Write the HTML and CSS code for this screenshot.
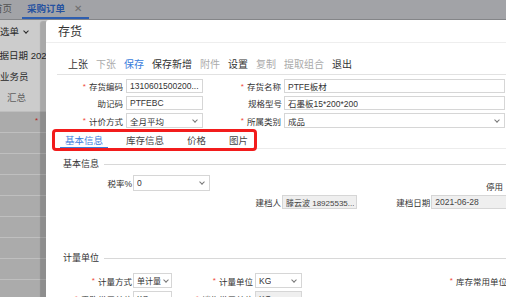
FILE: index.html
```html
<!DOCTYPE html>
<html lang="zh-CN">
<head>
    <meta charset="UTF-8">
    <meta name="viewport" content="width=device-width, initial-scale=1.0">
    <title>存货</title>
    <link rel="stylesheet" href="styles.css">
</head>
<body>
    <!-- page behind the dialog -->
    <div class="app">
        <div class="topbar">
            <span class="tab tab-home">首页</span>
            <span class="tab tab-active">采购订单<i class="tab-close">✕</i></span>
        </div>
        <div class="filters">
            <div class="filter filter-pick">选单 <span class="caret"></span></div>
            <div class="filter filter-date">单据日期 2021</div>
            <div class="filter filter-man">业务员</div>
        </div>
        <div class="grid">
            <div class="grid-head">汇总</div>
            <div class="grid-row"><span class="cell-star">*</span></div>
            <div class="grid-row"></div>
            <div class="grid-row"></div>
            <div class="grid-row"></div>
            <div class="grid-row"></div>
            <div class="grid-row"></div>
            <div class="grid-row"></div>
            <div class="grid-row"></div>
            <div class="grid-row"></div>
        </div>
    </div>
    <div class="mask"></div>

    <!-- 存货 dialog -->
    <div class="dialog">
        <div class="dlg-head">存货</div>
        <div class="toolbar">
            <span>上张</span>
            <span class="off">下张</span>
            <span class="primary">保存</span>
            <span>保存新增</span>
            <span class="off">附件</span>
            <span>设置</span>
            <span class="off">复制</span>
            <span class="off">提取组合</span>
            <span>退出</span>
        </div>

        <div class="form-head">
            <div class="lbl"><i class="req">*</i>存货编码</div><div class="box"><span class="val">1310601500200...</span></div>
            <div class="lbl"><i class="req">*</i>存货名称</div><div class="box"><span class="val">PTFE板材</span></div>
            <div class="lbl">助记码</div><div class="box"><span class="val">PTFEBC</span></div>
            <div class="lbl">规格型号</div><div class="box"><span class="val">石墨板15*200*200</span></div>
            <div class="lbl"><i class="req">*</i>计价方式</div><div class="box select"><span class="val">全月平均</span></div>
            <div class="lbl"><i class="req">*</i>所属类别</div><div class="box select"><span class="val">成品</span></div>
        </div>

        <div class="tabs">
            <span class="tab-item active">基本信息</span>
            <span class="tab-item">库存信息</span>
            <span class="tab-item">价格</span>
            <span class="tab-item">图片</span>
        </div>
        <div class="mark"></div>

        <div class="section section-basic">基本信息</div>
        <div class="row row-tax">
            <div class="lbl lbl-a">税率%</div><div class="box select box-tax"><span class="val">0</span></div>
            <div class="flag">停用</div>
        </div>
        <div class="row row-maker">
            <div class="lbl lbl-maker">建档人</div><div class="box off box-maker"><span class="val">滕云波 18925535...</span></div>
            <div class="lbl lbl-date">建档日期</div><div class="box off box-date"><span class="val">2021-06-28</span></div>
        </div>

        <div class="section section-unit">计量单位</div>
        <div class="row row-unit">
            <div class="lbl lbl-a"><i class="req">*</i>计量方式</div><div class="box select box-s"><span class="val">单计量</span></div>
            <div class="lbl lbl-b"><i class="req">*</i>计量单位</div><div class="box select box-m"><span class="val">KG</span></div>
            <div class="lbl lbl-c"><i class="req">*</i>库存常用单位</div>
        </div>
        <div class="row row-unit">
            <div class="lbl lbl-a"><i class="req">*</i>采购常用单位</div><div class="box select box-s"><span class="val">KG</span></div>
            <div class="lbl lbl-b"><i class="req">*</i>销售常用单位</div><div class="box select off box-m"><span class="val">KG</span></div>
        </div>
    </div>
</body>
</html>
```

FILE: styles.css
```css
* {
    box-sizing: border-box;
}

body {
    margin: 0;
    width: 506px;
    height: 297px;
    overflow: hidden;
    position: relative;
    background: #fff;
    color: #333;
    font-family: "Liberation Sans", "Noto Sans CJK SC", sans-serif;
}

/* background page */
.app {
    height: 100%;
}

.topbar {
    height: 20px;
    background: #cbccd1;
    border-bottom: 1px solid #a6a7ab;
    display: flex;
    align-items: flex-end;
    font-size: 9.5px;
}

.tab {
    height: 19px;
    line-height: 17px;
    padding: 0 5px;
    white-space: nowrap;
}

.tab-home {
    margin-left: -12px;
    margin-right: 5px;
    color: #666;
}

.tab-active {
    color: #2f67c9;
    font-weight: bold;
    padding-right: 7px;
    border-bottom: 2px solid #3a76dc;
}

.tab-close {
    font-style: normal;
    font-weight: normal;
    color: #8a8a8a;
    margin-left: 9px;
}

.filters {
    width: 46px;
    height: 66px;
    overflow: hidden;
    font-size: 9.5px;
    line-height: 12px;
    white-space: nowrap;
}

.filter-pick {
    padding-top: 6px;
}

.caret {
    display: inline-block;
    width: 4px;
    height: 4px;
    margin: 0 0 2px 2px;
    border-right: 1px solid #333;
    border-bottom: 1px solid #333;
    transform: rotate(45deg);
}

.filter-date {
    margin: 12px 0 0 -10px;
}

.filter-man {
    margin-top: 9px;
}

.grid {
    font-size: 9.5px;
}

.grid-head {
    height: 26px;
    padding: 4px 0 0 7px;
    color: #777;
    border-bottom: 1px solid #eee;
}

.grid-row {
    height: 21px;
    background: #d6d6d6;
    border-bottom: 1px solid #efefef;
}

.cell-star {
    display: block;
    padding: 4px 0 0 35px;
    color: #e0302a;
    font-size: 8px;
}

.mask {
    position: absolute;
    top: 0;
    left: 0;
    width: 100%;
    height: 100%;
    background: rgba(0, 0, 0, 0.2);
}

/* dialog */
.dialog {
    position: absolute;
    left: 46px;
    top: 20px;
    width: 462px;
    height: 290px;
    background: #fff;
    border-top-left-radius: 3px;
    box-shadow: -6px 1px 1px rgba(0, 0, 0, 0.17);
    overflow: hidden;
}

.dlg-head {
    height: 23px;
    line-height: 24px;
    padding-left: 12px;
    font-size: 12px;
    color: #333;
    border-bottom: 1px solid #eee;
}

.toolbar {
    display: flex;
    gap: 8px;
    margin-left: 11px;
    padding: 15px 0 2px 11px;
    line-height: 14px;
    font-size: 10px;
    color: #333;
    border-bottom: 1px solid #e2e2e2;
}

.toolbar .off {
    color: #aaa;
}

.toolbar .primary {
    color: #3a7ddc;
}

.form-head {
    display: grid;
    grid-template-columns: 80px 77px 81px 221px;
    grid-template-rows: 14px 14px 15px;
    row-gap: 3px;
    padding-top: 4px;
}

.lbl {
    display: flex;
    align-items: center;
    justify-content: flex-end;
    padding-right: 3px;
    font-size: 8.5px;
    color: #333;
    white-space: nowrap;
}

.form-head .lbl:nth-child(7) {
    padding-right: 2px;
}

.req {
    font-style: normal;
    color: #f0453c;
    font-size: 8px;
    margin-right: 3px;
}

.box {
    display: flex;
    align-items: center;
    padding: 0 1px 0 3px;
    border: 1px solid #d6d6d6;
    font-size: 8.5px;
    color: #333;
    white-space: nowrap;
    overflow: hidden;
}

.val {
    min-width: 0;
    overflow: hidden;
}

.box.off {
    background: #efefef;
    color: #444;
}

.select::after {
    content: "";
    flex: none;
    width: 3px;
    height: 3px;
    margin: 0 4px 2px auto;
    border-right: 1px solid #777;
    border-bottom: 1px solid #777;
    transform: rotate(45deg);
}

.tabs {
    display: flex;
    gap: 13px;
    margin: 3px 0 0 11px;
    padding-left: 3px;
    border-bottom: 1px solid #ececec;
}

.tab-item {
    padding: 3px 5px 0;
    line-height: 13px;
    font-size: 9.5px;
    color: #444;
    border-bottom: 2px solid transparent;
    margin-bottom: -1px;
}

.tab-item.active {
    color: #3a7ddc;
    border-bottom-color: #3a7ddc;
}

/* red highlight drawn over the tabs */
.mark {
    position: absolute;
    left: 6px;
    top: 109px;
    width: 205px;
    height: 22px;
    border: 3px solid #f21c1c;
    border-radius: 4px;
}

.section {
    display: flex;
    align-items: center;
    padding-left: 17px;
    line-height: 12px;
    font-size: 9px;
    color: #333;
}

.section::after {
    content: "";
    flex: 1;
    height: 1px;
    margin-left: 5px;
    background: #d8d8d8;
}

.section-basic {
    margin-top: 9px;
}

.section-unit {
    margin-top: 43px;
}

.row {
    display: flex;
}

.row-tax {
    height: 16px;
    margin-top: 5px;
}

.lbl-a {
    width: 87px;
    padding-right: 1px;
}

.box-tax {
    width: 77px;
}

.flag {
    margin-left: auto;
    margin-right: 5px;
    padding-top: 5px;
    font-size: 8.5px;
}

.row-maker {
    height: 14px;
    margin-top: 4px;
}

.lbl-maker {
    width: 247px;
    padding-right: 1px;
}

.box-maker {
    width: 78px;
    font-size: 8px;
}

.lbl-date {
    width: 78px;
    padding-right: 1px;
}

.box-date {
    width: 80px;
}

.row-unit {
    height: 15px;
    margin-top: 9px;
}

.row-unit + .row-unit {
    margin-top: 3px;
}

.box-s {
    width: 39px;
    font-size: 8px;
}

.box-s::after {
    margin-left: 3px;
    margin-right: 2px;
}

.lbl-b {
    width: 83px;
    padding-right: 2px;
}

.box-m {
    width: 47px;
}

.lbl-c {
    width: 205px;
    padding-right: 0;
    justify-content: flex-end;
}
```
